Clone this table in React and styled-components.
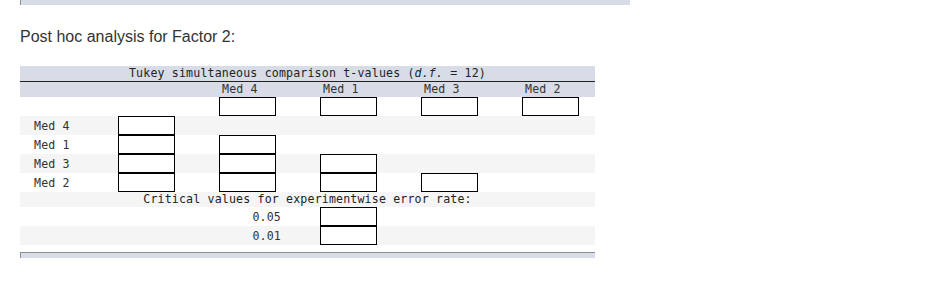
import * as React from 'react';
import styled, { createGlobalStyle } from 'styled-components';

const GlobalStyle = createGlobalStyle`
  body {
    margin: 0;
    background: #fff;
    font-family: "Liberation Sans", Arial, sans-serif;
  }
`;

const Page = styled.div`
  padding: 0 0 0 20px;
`;

const TopBar = styled.div`
  width: 609px;
  height: 5px;
  background: #d8dce6;
  border-left: 1px solid #8a8e96;
`;

const Title = styled.h2`
  margin: 23px 0 20px;
  font-size: 16px;
  font-weight: normal;
  line-height: 18px;
  color: #333;
`;

const Table = styled.div`
  width: 575px;
  font-family: "DejaVu Sans Mono", "Liberation Mono", monospace;
  font-size: 11.6px;
  letter-spacing: 0.16px;
  color: #333;
`;

const Row = styled.div`
  display: grid;
  grid-template-columns: 90px 101px 101px 101px 101px 81px;
  align-items: center;
  height: ${(p) => p.$h || 19}px;
  background: ${(p) => p.$bg || 'transparent'};
`;

const HeadRow = styled(Row)`
  background: #d8dce6;
  height: 15px;
  line-height: 15px;
`;

const CaptionRow = styled(HeadRow)`
  display: block;
  text-align: center;
  border-bottom: 1px solid #222;
  color: #222;
`;

const ColLabel = styled.div`
  padding-left: 11px;
  grid-column: ${(p) => p.$col};
`;

const RowLabel = styled.div`
  padding-left: 14px;
  grid-column: 1;
`;

const Cell = styled.div`
  grid-column: ${(p) => p.$col};
  padding-left: 8px;
  height: 100%;
  display: flex;
  align-items: center;
`;

const Box = styled.input`
  box-sizing: border-box;
  width: 57px;
  height: 19px;
  margin: 0;
  padding: 0 3px;
  border: 1px solid #000;
  border-radius: 0;
  background: #fff;
  font: inherit;
  outline: none;
`;

const NoteRow = styled.div`
  height: 15px;
  line-height: 15px;
  text-align: center;
  background: #f5f5f5;
  color: #222;
`;

const LevelLabel = styled.div`
  grid-column: 1 / 4;
  text-align: right;
  padding-right: 31px;
`;

const BottomBar = styled.div`
  margin-top: 7px;
  width: 574px;
  height: 5px;
  background: #d8dce6;
  border-top: 1px solid #8a8e96;
  border-left: 1px solid #8a8e96;
`;

const levels = ['Med 4', 'Med 1', 'Med 3', 'Med 2'];

export default function App() {
  return (
    <Page>
      <GlobalStyle />
      <TopBar />
      <Title>Post hoc analysis for Factor 2:</Title>
      <Table>
        <CaptionRow>
          Tukey simultaneous comparison t-values (<i>d.f.</i> = 12)
        </CaptionRow>
        <HeadRow>
          {levels.map((l, i) => (
            <ColLabel key={l} $col={i + 3}>
              {l}
            </ColLabel>
          ))}
        </HeadRow>
        <Row>
          {levels.map((l, i) => (
            <Cell key={l} $col={i + 3}>
              <Box />
            </Cell>
          ))}
        </Row>
        {levels.map((l, r) => (
          <Row key={l} $bg={r % 2 === 0 ? '#f5f5f5' : '#fff'}>
            <RowLabel>{l}</RowLabel>
            {Array.from({ length: r + 1 }).map((_, c) => (
              <Cell key={c} $col={c + 2}>
                <Box />
              </Cell>
            ))}
          </Row>
        ))}
        <NoteRow>Critical values for experimentwise error rate:</NoteRow>
        {['0.05', '0.01'].map((a, i) => (
          <Row key={a} $bg={i % 2 === 0 ? '#fff' : '#f5f5f5'}>
            <LevelLabel>{a}</LevelLabel>
            <Cell $col={4}>
              <Box />
            </Cell>
          </Row>
        ))}
        <BottomBar />
      </Table>
    </Page>
  );
}
